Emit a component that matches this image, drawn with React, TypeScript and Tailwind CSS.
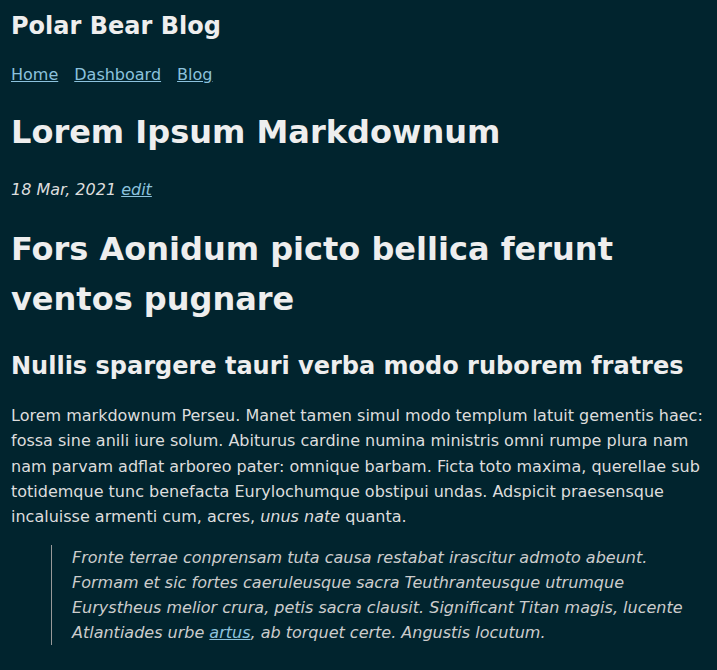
import React from 'react';

const font = { fontFamily: '"DejaVu Sans", Verdana, sans-serif' };

export default function App() {
  return (
    <div className="min-h-[670px] bg-[#01242e] text-[#dddddd] text-[16px] leading-[25px] px-[11px] pt-[8px]" style={font}>
      <header>
        <h2 className="text-[24px] leading-[36px] font-bold text-[#eeeeee]">Polar Bear Blog</h2>
        <nav className="mt-[19px] flex gap-[16px] leading-[24px]">
          <a href="#" className="text-[#8cc2dd] underline">Home</a>
          <a href="#" className="text-[#8cc2dd] underline">Dashboard</a>
          <a href="#" className="text-[#8cc2dd] underline">Blog</a>
        </nav>
      </header>
      <main>
        <h1 className="mt-[21px] text-[32px] leading-[48px] font-bold text-[#eeeeee]">Lorem Ipsum Markdownum</h1>
        <p className="mt-[21px] italic">
          <time>18 Mar, 2021</time>{' '}
          <a href="#" className="text-[#8cc2dd] underline">edit</a>
        </p>
        <h1 className="mt-[22px] text-[32px] leading-[50px] font-bold text-[#eeeeee]">
          Fors Aonidum picto bellica ferunt ventos pugnare
        </h1>
        <h2 className="mt-[24px] text-[24px] leading-[36px] font-bold text-[#eeeeee]">
          Nullis spargere tauri verba modo ruborem fratres
        </h2>
        <p className="mt-[19px] leading-[25.25px]">
          Lorem markdownum Perseu. Manet tamen simul modo templum latuit gementis haec: fossa sine anili iure solum.
          Abiturus cardine numina ministris omni rumpe plura nam nam parvam adflat arboreo pater: omnique barbam. Ficta
          toto maxima, querellae sub totidemque tunc benefacta Eurylochumque obstipui undas. Adspicit praesensque
          incaluisse armenti cum, acres, <em>unus nate</em> quanta.
        </p>
        <blockquote className="mt-[16px] ml-[40px] border-l border-[#999999] pl-[20px] italic text-[#cccccc]">
          <p>
            Fronte terrae conprensam tuta causa restabat irascitur admoto abeunt. Formam et sic fortes caeruleusque sacra
            Teuthranteusque utrumque Eurystheus melior crura, petis sacra clausit. Significant Titan magis, lucente
            Atlantiades urbe <a href="#" className="text-[#8cc2dd] underline">artus</a>, ab torquet certe. Angustis locutum.
          </p>
        </blockquote>
      </main>
    </div>
  );
}
